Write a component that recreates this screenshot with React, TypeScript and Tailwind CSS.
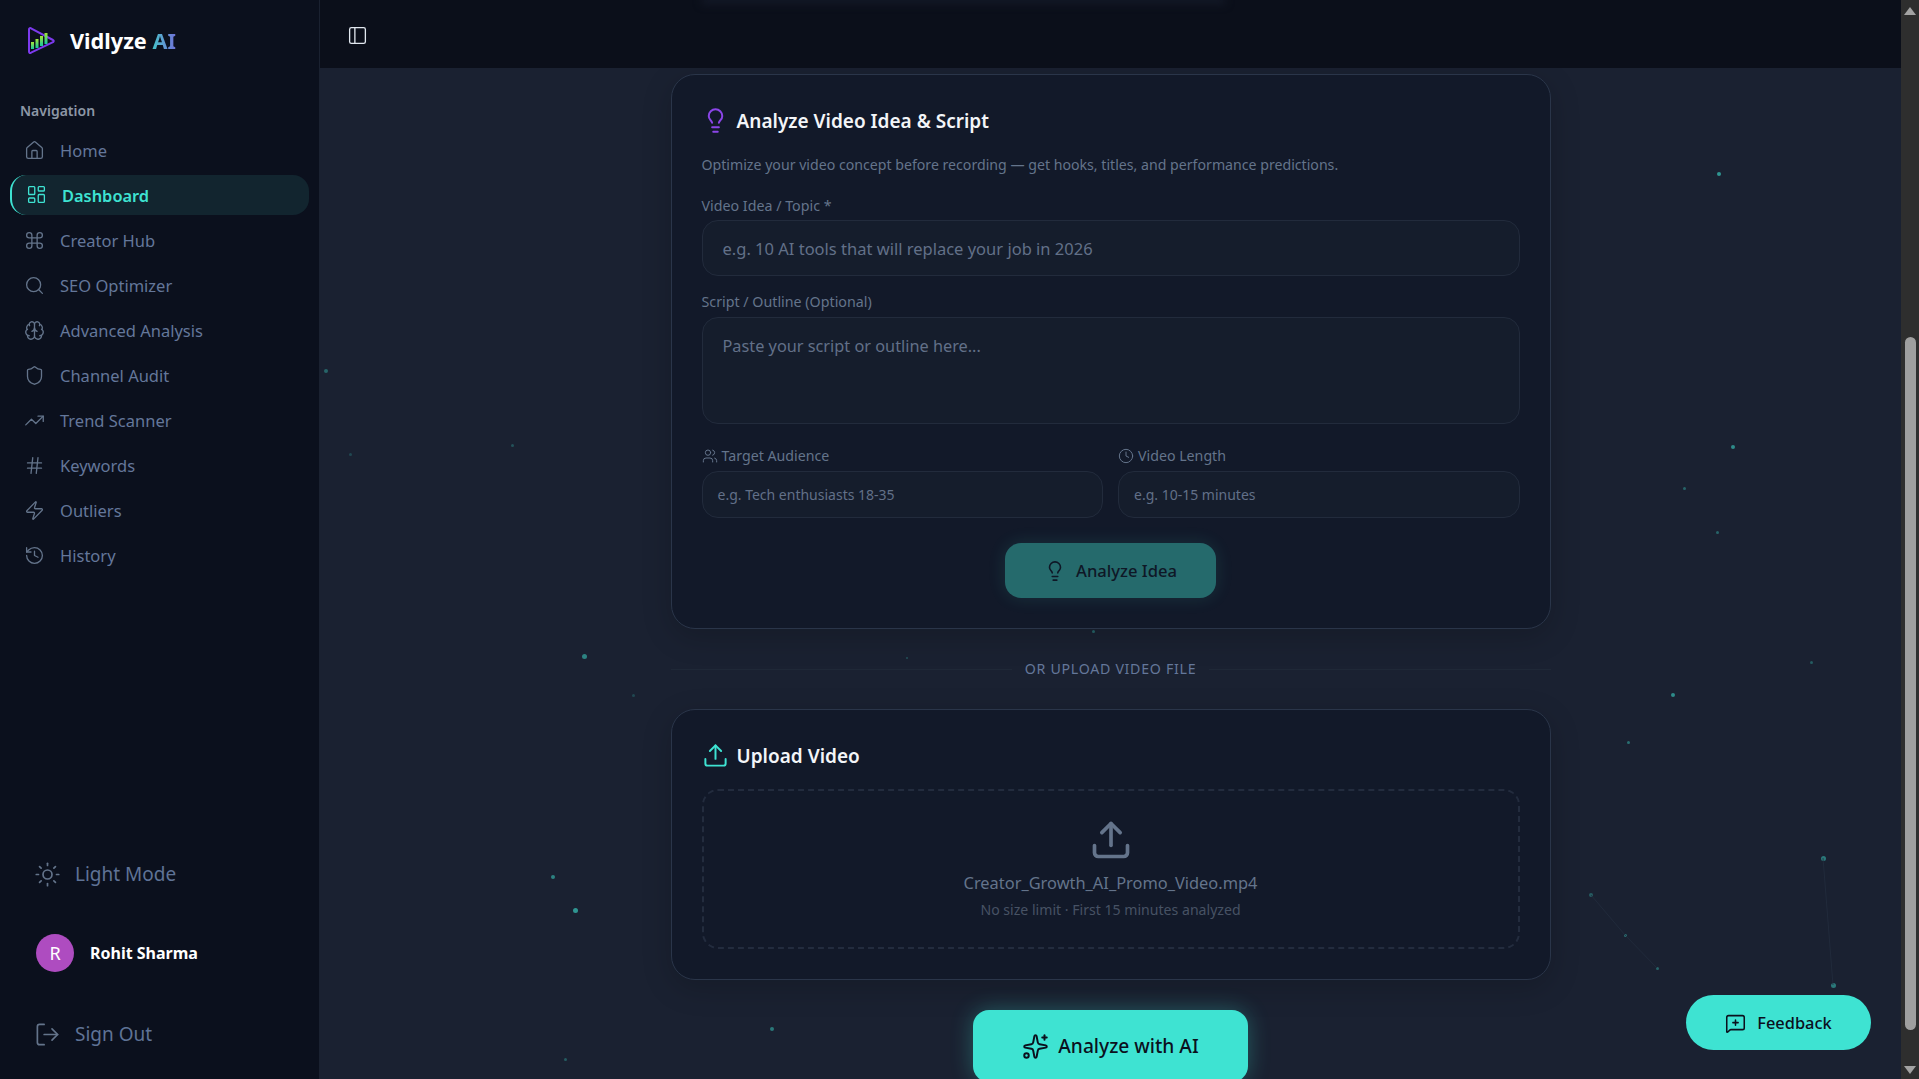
import {
  Brain,
  Clock,
  Command,
  Hash,
  History,
  House,
  LayoutDashboard,
  Lightbulb,
  LogOut,
  MessageSquarePlus,
  PanelLeft,
  Search,
  Shield,
  Sparkles,
  Sun,
  TrendingUp,
  Upload,
  Users,
  Zap,
} from "lucide-react";

const navItems = [
  { label: "Home", icon: House },
  { label: "Dashboard", icon: LayoutDashboard, active: true },
  { label: "Creator Hub", icon: Command },
  { label: "SEO Optimizer", icon: Search },
  { label: "Advanced Analysis", icon: Brain },
  { label: "Channel Audit", icon: Shield },
  { label: "Trend Scanner", icon: TrendingUp },
  { label: "Keywords", icon: Hash },
  { label: "Outliers", icon: Zap },
  { label: "History", icon: History },
];

// background particles: centre x, centre y, size, opacity
const dots = [
  [1719, 174, 4, 0.6],
  [1733, 447, 4, 0.55],
  [1684, 488, 3, 0.35],
  [1717, 532, 3, 0.35],
  [1673, 695, 4, 0.55],
  [1628, 742, 3, 0.4],
  [1811, 662, 3, 0.3],
  [1823, 858, 5, 0.45],
  [1833, 985, 5, 0.45],
  [1591, 895, 4, 0.3],
  [1625, 935, 3, 0.4],
  [1657, 968, 3, 0.35],
  [326, 371, 4, 0.35],
  [512, 445, 3, 0.25],
  [350, 454, 3, 0.2],
  [584, 656, 5, 0.5],
  [633, 695, 3, 0.2],
  [553, 877, 4, 0.5],
  [575, 910, 5, 0.6],
  [772, 1029, 4, 0.45],
  [565, 1059, 3, 0.3],
  [907, 658, 2, 0.25],
  [1093, 631, 3, 0.35],
];

function Logo() {
  return (
    <svg width="30" height="30" viewBox="0 0 30 30" fill="none">
      <defs>
        <linearGradient id="bars" x1="0" y1="1" x2="0" y2="0">
          <stop offset="0" stopColor="#16c7a0" />
          <stop offset="1" stopColor="#a3e635" />
        </linearGradient>
      </defs>
      <path d="M3 3.5 L3 25.5 Q3 27.5 5 26.7 L27 16.2 Q28.5 15 27 14 L5 2.3 Q3 1.6 3 3.5 Z" stroke="#7c3aed" strokeWidth="2" strokeLinejoin="round" />
      <rect x="5" y="16" width="3" height="7" fill="url(#bars)" />
      <rect x="9.5" y="13" width="3" height="9" fill="url(#bars)" />
      <rect x="14" y="10" width="3" height="10" fill="url(#bars)" />
      <rect x="18.5" y="7" width="3" height="11" fill="url(#bars)" />
    </svg>
  );
}

function Sidebar() {
  return (
    <aside className="flex w-[320px] shrink-0 flex-col border-r border-[#1a2130] bg-[#0b101d]">
      <div className="flex items-center gap-[14px] pl-[26px] pt-[25px]">
        <Logo />
        <span className="pt-[1px] text-[21.7px] leading-[30px] font-bold text-white">
          Vidlyze <span className="bg-gradient-to-r from-[#3fc3c8] to-[#6d6fd8] bg-clip-text text-transparent">AI</span>
        </span>
      </div>
      <div className="mt-[45px] pl-[20px] text-[14px] leading-[20px] font-semibold text-[#8d97a6]">Navigation</div>
      <nav className="mt-[8px] flex flex-col px-[10px]">
        {navItems.map((item) => {
          const Icon = item.icon;
          return item.active ? (
            <div key={item.label} className="mb-[4px] mt-[1px] flex h-[40px] w-[299px] items-center gap-[15px] rounded-[16px] border-l-2 border-[#3ee3d2] bg-[#12252f] pl-[14px] pt-[3px] text-[16.4px] font-semibold text-[#3ee3d2]">
              <Icon size={21} strokeWidth={1.5} className="mb-[4px]" />
              {item.label}
            </div>
          ) : (
            <div key={item.label} className="my-[2.5px] flex h-[40px] items-center gap-[15px] pl-[14px] text-[16.5px] text-[#64779a]">
              <Icon size={21} strokeWidth={1.5} className="mb-[3px] text-[#64748b]" />
              {item.label}
            </div>
          );
        })}
      </nav>
      <div className="mt-auto flex flex-col pl-[34px]">
        <div className="flex h-[30px] items-center gap-[14px] text-[19px] text-[#5f7396]">
          <Sun size={27} strokeWidth={1.5} className="text-[#64748b]" />
          Light Mode
        </div>
        <div className="ml-[2px] mt-[45px] flex items-center gap-[16px]">
          <div className="flex h-[38px] w-[38px] items-center justify-center rounded-full bg-[#ae4cc0] text-[18px] text-white">R</div>
          <span className="text-[16px] font-bold text-white">Rohit Sharma</span>
        </div>
        <div className="mb-[30px] mt-[47px] flex h-[30px] items-center gap-[14px] text-[19px] text-[#5f7396]">
          <LogOut size={27} strokeWidth={1.5} className="text-[#64748b]" />
          Sign Out
        </div>
      </div>
    </aside>
  );
}

function Scrollbar() {
  return (
    <div className="flex w-[18px] shrink-0 flex-col items-center bg-[#2e2e2e]">
      <div className="mt-[7px] h-0 w-0 border-x-[6.5px] border-b-[8px] border-x-transparent border-b-[#a3a3a3]" />
      <div className="mt-[322px] h-[693px] w-[11px] rounded-full bg-[#9f9f9f]" />
      <div className="mt-[36px] h-0 w-0 border-x-[6.5px] border-t-[8px] border-x-transparent border-t-[#a3a3a3]" />
    </div>
  );
}

function Field({ label, placeholder }: { label: string; placeholder: string }) {
  return (
    <div>
      <div className="mt-[21px] text-[14.25px] leading-[20px] text-[#64748b]">{label}</div>
      <div className="mt-[4px] flex h-[56px] items-center rounded-[16px] border border-[#222b3c] bg-[#151d2c] pl-[20px] pt-[2px] text-[16.5px] text-[#627088]">
        {placeholder}
      </div>
    </div>
  );
}

function SmallField({ icon: Icon, label, placeholder }: { icon: typeof Users; label: string; placeholder: string }) {
  return (
    <div className="flex-1">
      <div className="flex items-center gap-[4px] text-[14.2px] leading-[20px] text-[#64748b]">
        <Icon size={16} strokeWidth={1.5} />
        {label}
      </div>
      <div className="mt-[5px] flex h-[47px] items-center rounded-[16px] border border-[#222b3c] bg-[#151d2c] pl-[15px] text-[14px] text-[#627088]">
        {placeholder}
      </div>
    </div>
  );
}

function Content() {
  return (
    <div className="relative flex-1 overflow-hidden bg-[#1a2131]">
      {dots.map(([x, y, s, o]) => (
        <div
          key={`${x}-${y}`}
          className="absolute rounded-full bg-[#3ee3d2]"
          style={{ left: x - 320 - s / 2, top: y - 68 - s / 2, width: s, height: s, opacity: o }}
        />
      ))}
      <svg className="absolute inset-0 h-full w-full" fill="none" stroke="#232d3e" strokeWidth="1" opacity="0.8">
        <path d="M1271 827 L1305 867 L1337 900" />
        <path d="M1503 790 L1513 917" />
      </svg>
      <div className="relative mx-auto flex w-[880px] flex-col pt-[6px]">
        <section className="rounded-[24px] border border-[#2a3549] bg-[#121929] px-[30px] pb-[30px] pt-[30px] shadow-[0_8px_30px_rgba(0,0,0,0.18)]">
          <div className="flex h-[32px] items-center gap-[8px]">
            <Lightbulb size={27} strokeWidth={1.75} className="mb-[2px] text-[#8b45e8]" />
            <h2 className="text-[19px] font-semibold text-[#f3f5f8]">Analyze Video Idea &amp; Script</h2>
          </div>
          <p className="mt-[18px] text-[14.15px] leading-[20px] text-[#64748b]">
            Optimize your video concept before recording — get hooks, titles, and performance predictions.
          </p>
          <Field label="Video Idea / Topic *" placeholder="e.g. 10 AI tools that will replace your job in 2026" />
          <div className="mt-[16px] text-[14.25px] leading-[20px] text-[#64748b]">Script / Outline (Optional)</div>
          <div className="mt-[5px] h-[107px] rounded-[16px] border border-[#222b3c] bg-[#151d2c] pl-[20px] pt-[16px] text-[16.3px] leading-[24px] text-[#627088]">
            Paste your script or outline here...
          </div>
          <div className="mt-[22px] flex gap-[15px]">
            <SmallField icon={Users} label="Target Audience" placeholder="e.g. Tech enthusiasts 18-35" />
            <SmallField icon={Clock} label="Video Length" placeholder="e.g. 10-15 minutes" />
          </div>
          <div className="mt-[25px] flex justify-center">
            <div className="flex h-[55px] w-[211px] items-center justify-center gap-[10px] rounded-[16px] bg-[#256a6c] pt-[1px] text-[16.6px] font-medium text-[#0f1726] shadow-[0_0_18px_rgba(62,227,210,0.12)]">
              <Lightbulb size={22} strokeWidth={1.75} />
              Analyze Idea
            </div>
          </div>
        </section>

        <div className="my-[29px] flex items-center gap-[13px]">
          <div className="h-px flex-1 bg-[#1f2837]" />
          <span className="text-[14.2px] leading-[22px] tracking-[0.7px] text-[#64779a]">OR UPLOAD VIDEO FILE</span>
          <div className="h-px flex-1 bg-[#1f2837]" />
        </div>

        <section className="rounded-[24px] border border-[#2a3549] bg-[#121929] px-[30px] pb-[30px] pt-[30px] shadow-[0_8px_30px_rgba(0,0,0,0.18)]">
          <div className="flex h-[32px] items-center gap-[8px]">
            <Upload size={27} strokeWidth={1.75} className="mb-[2px] text-[#3ee3d2]" />
            <h2 className="text-[19px] font-semibold text-[#f3f5f8]">Upload Video</h2>
          </div>
          <div className="mt-[17px] flex h-[160px] flex-col items-center rounded-[16px] border-2 border-dashed border-[#232c3e] pt-[27px]">
            <Upload size={44} strokeWidth={2} className="text-[#64748b]" />
            <div className="mt-[8px] text-[16.4px] leading-[26px] text-[#64748b]">Creator_Growth_AI_Promo_Video.mp4</div>
            <div className="mt-[4px] text-[14.1px] leading-[20px] text-[#475264]">No size limit · First 15 minutes analyzed</div>
          </div>
        </section>

        <div className="mt-[30px] flex justify-center">
          <div className="flex h-[72px] w-[275px] items-center justify-center gap-[9px] rounded-[16px] bg-[#3ee3d2] text-[19.2px] font-medium text-[#0b101d] shadow-[0_0_22px_rgba(62,227,210,0.3)]">
            <Sparkles size={27} strokeWidth={1.75} />
            Analyze with AI
          </div>
        </div>
      </div>
    </div>
  );
}

export default function App() {
  return (
    <div className="relative flex h-screen overflow-hidden font-['Noto_Sans',sans-serif]">
      <Sidebar />
      <main className="flex min-w-0 flex-1 flex-col">
        <header className="relative flex h-[68px] shrink-0 items-center overflow-hidden bg-[#0b0f1a] pl-[27px] pt-[2px]">
          <PanelLeft size={21} strokeWidth={1.5} className="text-[#e2e8f0]" />
          {/* content scrolled under the blurred header */}
          <div className="absolute left-[382px] top-[-4px] h-[8px] w-[523px] bg-[#141a28] blur-[4px]" />
        </header>
        <Content />
      </main>
      <Scrollbar />
      <div className="absolute left-[1686px] top-[995px] flex h-[55px] w-[185px] items-center justify-center gap-[11px] rounded-full bg-[#3ee3d2] pt-[2px] text-[16.4px] font-medium text-[#0b101d]">
        <MessageSquarePlus size={21} strokeWidth={1.75} />
        Feedback
      </div>
    </div>
  );
}
